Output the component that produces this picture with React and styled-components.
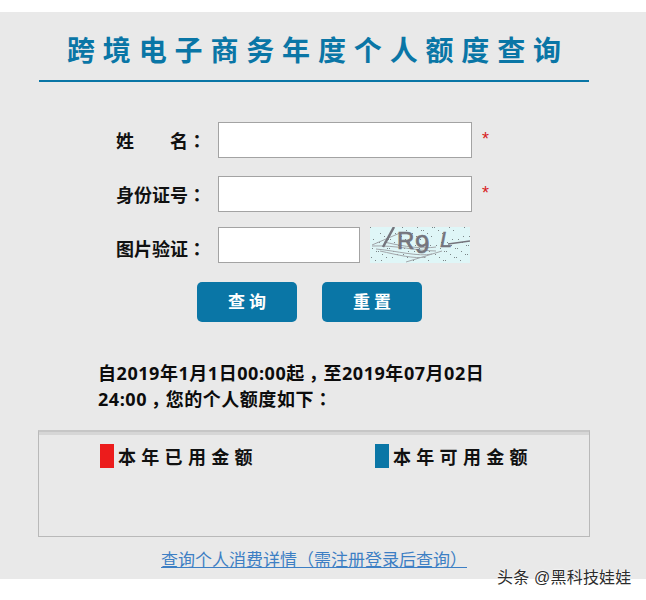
import React from 'react'
import styled, { createGlobalStyle } from 'styled-components'

const GlobalStyle = createGlobalStyle`
  html, body {
    margin: 0;
    background: #fff;
    font-family: "Liberation Sans", "Noto Sans CJK SC", sans-serif;
  }
`

const Page = styled.div`
  position: relative;
  width: 646px;
  height: 600px;
  padding-top: 12px;
  box-sizing: border-box;
  overflow: hidden;
`

const Panel = styled.main`
  height: 567px;
  background: #e9e9e9;
  padding: 0 56px 0 39px;
  box-sizing: border-box;
`

const Title = styled.h1`
  margin: 0;
  width: 550px;
  height: 70px;
  box-sizing: border-box;
  padding: 22px 0 0 28px;
  border-bottom: 2px solid #0a76a6;
  color: #0a76a6;
  font-size: 28px;
  line-height: 36px;
  font-weight: 700;
  letter-spacing: 7.85px;
  white-space: nowrap;
`

const Form = styled.form`
  display: flex;
  flex-direction: column;
  margin-top: 40px;
`

const Row = styled.div`
  display: flex;
  align-items: center;
  height: 36px;
  margin-bottom: ${(p) => p.$gap}px;
`

const Label = styled.label`
  display: flex;
  justify-content: space-between;
  flex: none;
  width: 90px;
  margin: ${(p) => p.$drop}px 12px 0 77px;
  font-size: 18px;
  line-height: 24px;
  font-weight: 700;
  color: #111;
  white-space: nowrap;
`

// traditional cut centres the full-width colon in its em box
const Colon = styled.span`
  font-family: "Noto Sans CJK TC", sans-serif;
  line-height: 0;
`

// half-width comma glyph, padded back out so it sits mid-box
const Comma = styled.span`
  padding: 0 5px 0 4px;
  line-height: 0;
  font-feature-settings: "halt";
`

const Field = styled.input`
  flex: none;
  width: ${(p) => p.$width}px;
  height: 36px;
  box-sizing: border-box;
  padding: 0 8px;
  background: #fff;
  border: 1px solid #a3a3a3;
  outline: none;
`

const Star = styled.span`
  align-self: flex-start;
  margin: 5px 0 0 10px;
  color: #d8201c;
  font-size: 18px;
  line-height: 24px;
`

const Captcha = styled.svg`
  display: block;
  flex: none;
  margin-left: 10px;
`

const Buttons = styled.div`
  display: flex;
  gap: 25px;
  margin: 19px 0 0 158px;
`

const Button = styled.button`
  width: 100px;
  height: 40px;
  padding: 2px 0 0 4px;
  border: none;
  border-radius: 5px;
  background: #0a76a6;
  color: #fff;
  font: 700 17px/38px "Liberation Sans", "Noto Sans CJK SC", sans-serif;
  letter-spacing: 4px;
`

const Notice = styled.p`
  width: 420px;
  margin: 38px 0 0 59px;
  font-family: "Open Sans", "Noto Sans CJK SC", sans-serif;
  font-size: 18px;
  line-height: 26px;
  font-weight: 700;
  letter-spacing: 0.55px;
  color: #0c0c0c;
`

const ResultBox = styled.section`
  display: flex;
  width: 552px;
  height: 107px;
  margin: 18px 0 0 -1px;
  box-sizing: border-box;
  padding: 12px 0 0 61px;
  border: 1px solid #b9b9b9;
  border-top: 2px solid #c6c6c6;
  box-shadow: inset 0 3px 0 #d6d6d6;
`

const Legend = styled.div`
  display: flex;
  flex: none;
  align-items: center;
  gap: 4px;
  width: 275px;
  height: 24px;
  font-size: 18px;
  font-weight: 700;
  letter-spacing: 5.3px;
  color: #111;
`

const Swatch = styled.span`
  width: 14px;
  height: 24px;
  background: ${(p) => p.$color};
`

const DetailLink = styled.a`
  display: block;
  width: 552px;
  margin: 12px 0 0 -1px;
  text-align: center;
  color: #3d7fc4;
  font-size: 17px;
  line-height: 24px;
  text-decoration: underline;
`

const Watermark = styled.span`
  position: absolute;
  left: 497px;
  top: 568px;
  color: #2c2c2c;
  font-size: 16px;
  line-height: 20px;
  letter-spacing: 0.2px;
  text-shadow: 0 0 2px #fff, 0 0 2px #fff;
  white-space: nowrap;
`

const dots = Array.from({ length: 90 }, (_, i) => ({
  x: (i * 37) % 100,
  y: (i * 23 + (i % 3) * 7) % 36,
}))

const captchaFont = '"Liberation Sans", sans-serif'

const CaptchaImage = () => (
  <Captcha width='100' height='36' viewBox='0 0 100 36'>
    <rect width='100' height='36' fill='#dff6f7' />
    {dots.map((d, i) => (
      <rect key={i} x={d.x} y={d.y} width='1' height='1' fill='#7c8688' />
    ))}
    <path
      d='M2 18 L30 6 M2 19 C26 18 48 24 66 24 M6 22 C28 24 48 30 62 27 M10 24 C28 28 44 32 56 30 M36 35 L72 24 M14 15 C36 20 52 22 66 20'
      stroke='#a2a6aa'
      strokeWidth='1'
      fill='none'
    />
    <path d='M13 20 L24 0' stroke='#74747c' strokeWidth='2.5' fill='none' />
    <path d='M78 17 L100 14' stroke='#74747c' strokeWidth='1.5' fill='none' />
    <text x='27' y='22' fill='#74747c' stroke='#74747c' strokeWidth='0.7' fontFamily={captchaFont} fontSize='24'>
      R
    </text>
    <text x='45' y='26' fill='#74747c' stroke='#74747c' strokeWidth='0.7' fontFamily={captchaFont} fontSize='26'>
      9
    </text>
    <text x='70' y='20' fill='#74747c' stroke='#74747c' strokeWidth='0.5' fontFamily={captchaFont} fontSize='22' fontStyle='italic'>
      L
    </text>
  </Captcha>
)

const App = () => {
  return (
    <Page>
      <GlobalStyle />
      <Panel>
        <Title>跨境电子商务年度个人额度查询</Title>
        <Form>
          <Row $gap={18}>
            <Label $drop={4}>
              <span>姓</span>
              <span>
                名<Colon>：</Colon>
              </span>
            </Label>
            <Field $width={254} />
            <Star>*</Star>
          </Row>
          <Row $gap={15}>
            <Label $drop={4}>
              <span>
                身份证号<Colon>：</Colon>
              </span>
            </Label>
            <Field $width={254} />
            <Star>*</Star>
          </Row>
          <Row $gap={0}>
            <Label $drop={10}>
              <span>
                图片验证<Colon>：</Colon>
              </span>
            </Label>
            <Field $width={142} />
            <CaptchaImage />
          </Row>
          <Buttons>
            <Button type='button'>查询</Button>
            <Button type='button'>重置</Button>
          </Buttons>
        </Form>
        <Notice>
          自2019年1月1日00:00起<Comma>，</Comma>至2019年07月02日
          <br />
          24:00<Comma>，</Comma>您的个人额度如下<Colon>：</Colon>
        </Notice>
        <ResultBox>
          <Legend>
            <Swatch $color='#ec1c1c' />
            本年已用金额
          </Legend>
          <Legend>
            <Swatch $color='#0a76a6' />
            本年可用金额
          </Legend>
        </ResultBox>
        <DetailLink href='#'>查询个人消费详情（需注册登录后查询）</DetailLink>
      </Panel>
      <Watermark>头条 @黑科技娃娃</Watermark>
    </Page>
  )
}

export default App
